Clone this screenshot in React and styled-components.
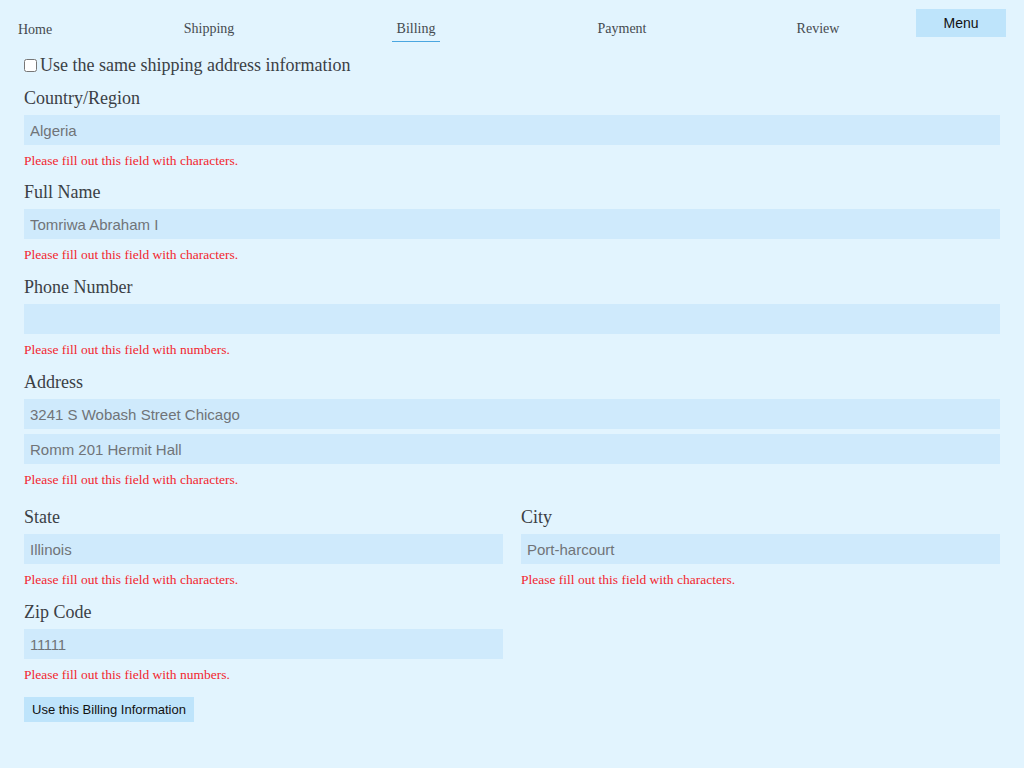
import React from "react";
import styled, { createGlobalStyle } from "styled-components";

const Global = createGlobalStyle`
  html, body { margin: 0; padding: 0; background: #e2f4fe; }
  body { min-height: 100vh; font-family: "Liberation Serif", "Times New Roman", serif; }
  * { box-sizing: border-box; }
`;

const Page = styled.div`
  min-height: 768px;
  background: #e2f4fe;
`;

const Nav = styled.nav`
  display: grid;
  grid-template-columns: 102px 198px 216px 196px 196px 90px;
  align-items: start;
  padding: 9px 18px 0 8px;
`;

const NavLink = styled.a`
  justify-self: ${(p) => (p.$left ? "start" : "center")};
  margin-top: ${(p) => (p.$left ? "13px" : "12px")};
  padding: 0 5px 4px;
  padding-left: ${(p) => (p.$left ? "10px" : "5px")};
  font-family: "Liberation Serif", serif;
  font-size: 14px;
  line-height: 16px;
  color: #454a4f;
  text-decoration: none;
  border-bottom: 1px solid ${(p) => (p.$active ? "#4aa6e0" : "transparent")};
`;

const MenuButton = styled.button`
  height: 28px;
  width: 90px;
  border: none;
  background: #bee4fb;
  color: #111;
  font-family: "Liberation Sans", Arial, sans-serif;
  font-size: 14px;
  padding: 0;
`;

const Form = styled.form`
  padding: 11px 24px 40px 24px;
`;

const CheckRow = styled.label`
  display: flex;
  align-items: center;
  height: 22px;
  font-size: 18px;
  color: #3b4045;
  margin-bottom: 11px;
`;

const Check = styled.input`
  width: 13px;
  height: 13px;
  margin: 0 3px 0 0;
`;

const Field = styled.div`
  display: flex;
  flex-direction: column;
  margin-bottom: ${(p) => p.$gap ?? 13}px;
`;

const Label = styled.label`
  font-size: 18px;
  line-height: 22px;
  color: #3b4045;
  margin-bottom: 6px;
`;

const Input = styled.input`
  height: 30px;
  width: 100%;
  border: none;
  outline: none;
  background: #cfeafc;
  padding: 0 6px;
  font-family: "Liberation Sans", Arial, sans-serif;
  font-size: 15px;
  color: #707478;
  letter-spacing: ${(p) => (p.$tight ? "-0.3px" : "normal")};
  margin-bottom: ${(p) => (p.$stack ? "5px" : "0")};
  &::placeholder { color: #707478; }
`;

const Error = styled.div`
  margin-top: 8px;
  font-size: 13.5px;
  line-height: 16px;
  color: #f2262e;
`;

const Row = styled.div`
  display: grid;
  grid-template-columns: 1fr 1fr;
  column-gap: 18px;
  margin-top: ${(p) => p.$top ?? 0}px;
`;

const Submit = styled.button`
  margin-top: 14px;
  height: 25px;
  padding: 0 8px;
  border: none;
  background: #bee4fb;
  color: #111;
  font-family: "Liberation Sans", Arial, sans-serif;
  font-size: 13px;
`;

const CHARS = "Please fill out this field with characters.";
const NUMS = "Please fill out this field with numbers.";

function FormField({ label, values, error, tight, gap }) {
  return (
    <Field $gap={gap}>
      <Label>{label}</Label>
      {values.map((v, i) => (
        <Input
          key={i}
          defaultValue={v}
          $tight={tight}
          $stack={i < values.length - 1}
        />
      ))}
      <Error>{error}</Error>
    </Field>
  );
}

export default function App() {
  return (
    <Page>
      <Global />
      <Nav>
        <NavLink $left href="#">Home</NavLink>
        <NavLink href="#">Shipping</NavLink>
        <NavLink $active href="#">Billing</NavLink>
        <NavLink href="#">Payment</NavLink>
        <NavLink href="#">Review</NavLink>
        <MenuButton type="button">Menu</MenuButton>
      </Nav>
      <Form onSubmit={(e) => e.preventDefault()}>
        <CheckRow>
          <Check type="checkbox" />
          Use the same shipping address information
        </CheckRow>
        <FormField label="Country/Region" values={["Algeria"]} error={CHARS} gap={12} />
        <FormField label="Full Name" values={["Tomriwa Abraham I"]} error={CHARS} />
        <FormField label="Phone Number" values={[""]} error={NUMS} />
        <FormField
          label="Address"
          values={["3241 S Wobash Street Chicago", "Romm 201 Hermit Hall"]}
          error={CHARS}
        />
        <Row $top={18}>
          <FormField label="State" values={["Illinois"]} error={CHARS} />
          <FormField label="City" values={["Port-harcourt"]} error={CHARS} />
        </Row>
        <Row>
          <FormField label="Zip Code" values={["11111"]} error={NUMS} tight gap={0} />
        </Row>
        <Submit type="submit">Use this Billing Information</Submit>
      </Form>
    </Page>
  );
}
